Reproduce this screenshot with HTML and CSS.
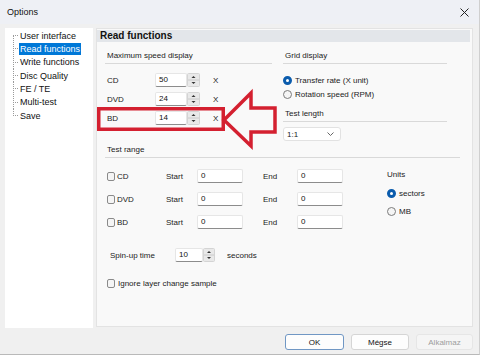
FILE: index.html
```html
<!DOCTYPE html>
<html>
<head>
<meta charset="utf-8">
<link rel="stylesheet" href="styles.css">
</head>
<body>
<div class="window">
  <div class="titlebar">
    <span class="title">Options</span>
    <svg class="close" width="9" height="9" viewBox="0 0 9 9"><path d="M0.5 0.5 L8.5 8.5 M8.5 0.5 L0.5 8.5" stroke="#222" stroke-width="1"/></svg>
  </div>
  <div class="main">
    <div class="tree">
      <ul>
        <li class="first"><span>User interface</span></li>
        <li><span class="sel">Read functions</span></li>
        <li><span>Write functions</span></li>
        <li><span>Disc Quality</span></li>
        <li><span>FE / TE</span></li>
        <li><span>Multi-test</span></li>
        <li class="last"><span>Save</span></li>
      </ul>
    </div>
    <div class="panel">
      <div class="panel-head">Read functions</div>
      <div class="panel-body">
        <div class="top">
          <div class="col">
            <div class="gtitle">Maximum speed display</div>
            <div class="srows">
              <div class="srow"><span class="slabel">CD</span><span class="tb w32">50</span><svg class="spin" width="13" height="14" viewBox="0 0 13 14"><rect x="0.5" y="0.5" width="12" height="13" rx="1" fill="#e9e9e9" stroke="#d4d4d4"/><line x1="1" y1="7" x2="12" y2="7" stroke="#cacaca"/><path d="M4.5 5 L6.5 3 L8.5 5Z" fill="#333"/><path d="M4.5 9 L6.5 11 L8.5 9Z" fill="#333"/></svg><span class="x">X</span></div>
              <div class="srow"><span class="slabel">DVD</span><span class="tb w32">24</span><svg class="spin" width="13" height="14" viewBox="0 0 13 14"><rect x="0.5" y="0.5" width="12" height="13" rx="1" fill="#e9e9e9" stroke="#d4d4d4"/><line x1="1" y1="7" x2="12" y2="7" stroke="#cacaca"/><path d="M4.5 5 L6.5 3 L8.5 5Z" fill="#333"/><path d="M4.5 9 L6.5 11 L8.5 9Z" fill="#333"/></svg><span class="x">X</span></div>
              <div class="srow"><span class="slabel">BD</span><span class="tb w32">14</span><svg class="spin" width="13" height="14" viewBox="0 0 13 14"><rect x="0.5" y="0.5" width="12" height="13" rx="1" fill="#e9e9e9" stroke="#d4d4d4"/><line x1="1" y1="7" x2="12" y2="7" stroke="#cacaca"/><path d="M4.5 5 L6.5 3 L8.5 5Z" fill="#333"/><path d="M4.5 9 L6.5 11 L8.5 9Z" fill="#333"/></svg><span class="x">X</span></div>
            </div>
          </div>
          <div class="col">
            <div class="gtitle">Grid display</div>
            <div class="radios">
              <div class="radio-row"><span class="radio on"></span>Transfer rate (X unit)</div>
              <div class="radio-row"><span class="radio"></span>Rotation speed (RPM)</div>
            </div>
            <div class="gtitle tl">Test length</div>
            <div class="select"><span>1:1</span><svg width="7" height="4" viewBox="0 0 7 4"><polyline points="0.5,0.5 3.5,3.5 6.5,0.5" fill="none" stroke="#666" stroke-width="1"/></svg></div>
          </div>
        </div>
        <div class="gtitle wide">Test range</div>
        <div class="range">
          <div class="rrows">
            <div class="rrow"><span class="chkcell"><span class="chk"></span>CD</span><span class="lstart">Start</span><span class="tb w46">0</span><span class="lend">End</span><span class="tb w46">0</span></div>
            <div class="rrow"><span class="chkcell"><span class="chk"></span>DVD</span><span class="lstart">Start</span><span class="tb w46">0</span><span class="lend">End</span><span class="tb w46">0</span></div>
            <div class="rrow"><span class="chkcell"><span class="chk"></span>BD</span><span class="lstart">Start</span><span class="tb w46">0</span><span class="lend">End</span><span class="tb w46">0</span></div>
          </div>
          <div class="units">
            <div class="ulabel">Units</div>
            <div class="radio-row u1"><span class="radio on"></span>sectors</div>
            <div class="radio-row u2"><span class="radio"></span>MB</div>
          </div>
        </div>
        <div class="spinrow">
          <span class="splabel">Spin-up time</span><span class="tb w28">10</span><svg class="spin" width="12" height="14" viewBox="0 0 12 14"><rect x="0.5" y="0.5" width="11" height="13" rx="1" fill="#e9e9e9" stroke="#d4d4d4"/><line x1="1" y1="7" x2="11" y2="7" stroke="#cacaca"/><path d="M4 5 L6 3 L8 5Z" fill="#333"/><path d="M4 9 L6 11 L8 9Z" fill="#333"/></svg><span class="secs">seconds</span>
        </div>
        <div class="ignore"><span class="chk"></span>Ignore layer change sample</div>
      </div>
    </div>
  </div>
  <div class="footer">
    <div class="btn ok">OK</div>
    <div class="btn">Mégse</div>
    <div class="btn dis">Alkalmaz</div>
  </div>
  <svg class="annot" width="480" height="356" viewBox="0 0 480 356">
    <rect x="98.75" y="108.75" width="124.5" height="20.5" fill="none" stroke="#d42030" stroke-width="3.5"/>
    <polygon points="224,120 251,93 251,108 275,108 275,132 251,132 251,146" fill="none" stroke="#d42030" stroke-width="3.5" stroke-linejoin="miter"/>
  </svg>
</div>
</body>
</html>
```

FILE: styles.css
```css
* { box-sizing: border-box; }
body {
  margin: 0;
  background: #ffffff;
  font-family: "Liberation Sans", Arial, sans-serif;
  font-size: 8px;
  color: #1b1b1b;
}
.window {
  position: relative;
  width: 480px;
  height: 355px;
  background: #f0f0f0;
  border-right: 1px solid #cfcfcf;
  border-bottom: 1px solid #b9b9b9;
}
.titlebar {
  height: 24px;
  background: #eef0f5;
  display: flex;
  align-items: center;
  justify-content: space-between;
  padding: 0 10px 0 7px;
  font-size: 9px;
  color: #111;
}
.close { display: block; }
.main {
  display: flex;
  gap: 3px;
  padding: 4px 0 0 5px;
}
.tree {
  width: 88px;
  height: 300px;
  background: #ffffff;
  font-size: 9px;
  color: #111;
}
.tree ul {
  list-style: none;
  margin: 0;
  padding: 1px 0 0 8px;
}
.tree li {
  height: 13.33px;
  line-height: 13.33px;
  padding-left: 6px;
  background:
    repeating-linear-gradient(to right, #9a9a9a 0 1px, transparent 1px 2px) 0 50% / 5px 1px no-repeat,
    repeating-linear-gradient(to bottom, #9a9a9a 0 1px, transparent 1px 2px) 0 0 / 1px 100% no-repeat;
}
.tree li.first {
  background:
    repeating-linear-gradient(to right, #9a9a9a 0 1px, transparent 1px 2px) 0 50% / 5px 1px no-repeat,
    repeating-linear-gradient(to bottom, #9a9a9a 0 1px, transparent 1px 2px) 0 100% / 1px 50% no-repeat;
}
.tree li.last {
  background:
    repeating-linear-gradient(to right, #9a9a9a 0 1px, transparent 1px 2px) 0 50% / 5px 1px no-repeat,
    repeating-linear-gradient(to bottom, #9a9a9a 0 1px, transparent 1px 2px) 0 0 / 1px 50% no-repeat;
}
.tree li span {
  display: inline-block;
  line-height: 12px;
  padding: 0 1px;
  vertical-align: middle;
}
.tree li span.sel {
  background: #0078d7;
  color: #ffffff;
}
.panel {
  width: 377px;
  height: 299px;
  background: #f9f9f9;
  border: 1px solid #e3e3e3;
}
.panel-head {
  margin: 1px 2px 0 0;
  height: 12px;
  line-height: 12px;
  background: #e3e6ea;
  font-weight: bold;
  font-size: 10px;
  padding-left: 3px;
  color: #111;
}
.panel-body { padding-left: 8px; }
.top {
  display: grid;
  grid-template-columns: 167px 164px;
  column-gap: 11px;
}
.gtitle {
  margin-top: 8px;
  height: 14px;
  line-height: 11px;
  padding: 0 0 2px 2px;
  border-bottom: 1px solid #d9d9d9;
}
.gtitle.tl { margin-top: 7px; }
.gtitle.wide { margin-top: 3px; width: 355px; }
.srows {
  display: flex;
  flex-direction: column;
  gap: 5px;
  margin-top: 9px;
}
.srow, .rrow, .radio-row, .spinrow, .ignore {
  display: flex;
  align-items: center;
  height: 14px;
}
.slabel { width: 50px; padding-left: 2px; }
.tb {
  height: 14px;
  line-height: 12px;
  background: #ffffff;
  border: 1px solid #e6e6e6;
  border-bottom-color: #8c8c8c;
  border-radius: 2px;
  padding-left: 3px;
  color: #111;
}
.w32 { width: 32px; }
.w46 { width: 46px; }
.w28 { width: 28px; }
.spin { display: block; }
.x { margin-left: 13px; }
.radios { margin-top: 9px; display: flex; flex-direction: column; }
.radio-row { gap: 3px; }
.radio {
  width: 9px;
  height: 9px;
  border-radius: 50%;
  border: 1px solid #7c7c7c;
  background: #f5f5f5;
}
.radio.on {
  border: 3px solid #0b5cad;
  background: #ffffff;
}
.select {
  margin-top: 5px;
  width: 58px;
  height: 14px;
  background: #ffffff;
  border: 1px solid #e2e2e2;
  border-radius: 3px;
  display: flex;
  align-items: center;
  justify-content: space-between;
  padding: 0 6px 0 3px;
}
.select svg { display: block; }
.range { display: flex; margin-top: 11px; }
.rrows { display: flex; flex-direction: column; gap: 9px; }
.chkcell {
  width: 61px;
  padding-left: 2px;
  display: flex;
  align-items: center;
  gap: 2px;
}
.chk {
  width: 8px;
  height: 9px;
  border: 1px solid #8a8a8a;
  border-radius: 2px;
  background: #f5f5f5;
}
.lstart { width: 31px; }
.lend { margin-left: 20px; width: 34px; }
.units { margin-left: 44px; }
.ulabel { line-height: 11px; height: 11px; }
.u1 { margin-top: 6px; }
.u2 { margin-top: 4px; }
.spinrow { margin-top: 19px; }
.splabel { width: 70px; padding-left: 5px; }
.secs { margin-left: 12px; }
.ignore { margin-top: 14px; padding-left: 2px; gap: 3px; }
.footer {
  display: flex;
  justify-content: flex-end;
  gap: 7px;
  padding: 6px 6px 0 0;
}
.btn {
  width: 58px;
  height: 16px;
  border: 1px solid #d5d5d5;
  border-radius: 3px;
  background: #fdfdfd;
  display: flex;
  align-items: center;
  justify-content: center;
  color: #111;
}
.btn.ok { width: 59px; border-color: #7097c4; }
.btn.dis { width: 57px; color: #9d9d9d; background: #f5f5f5; border-color: #e6e6e6; }
.annot {
  position: absolute;
  left: 0;
  top: 0;
  pointer-events: none;
}
```
